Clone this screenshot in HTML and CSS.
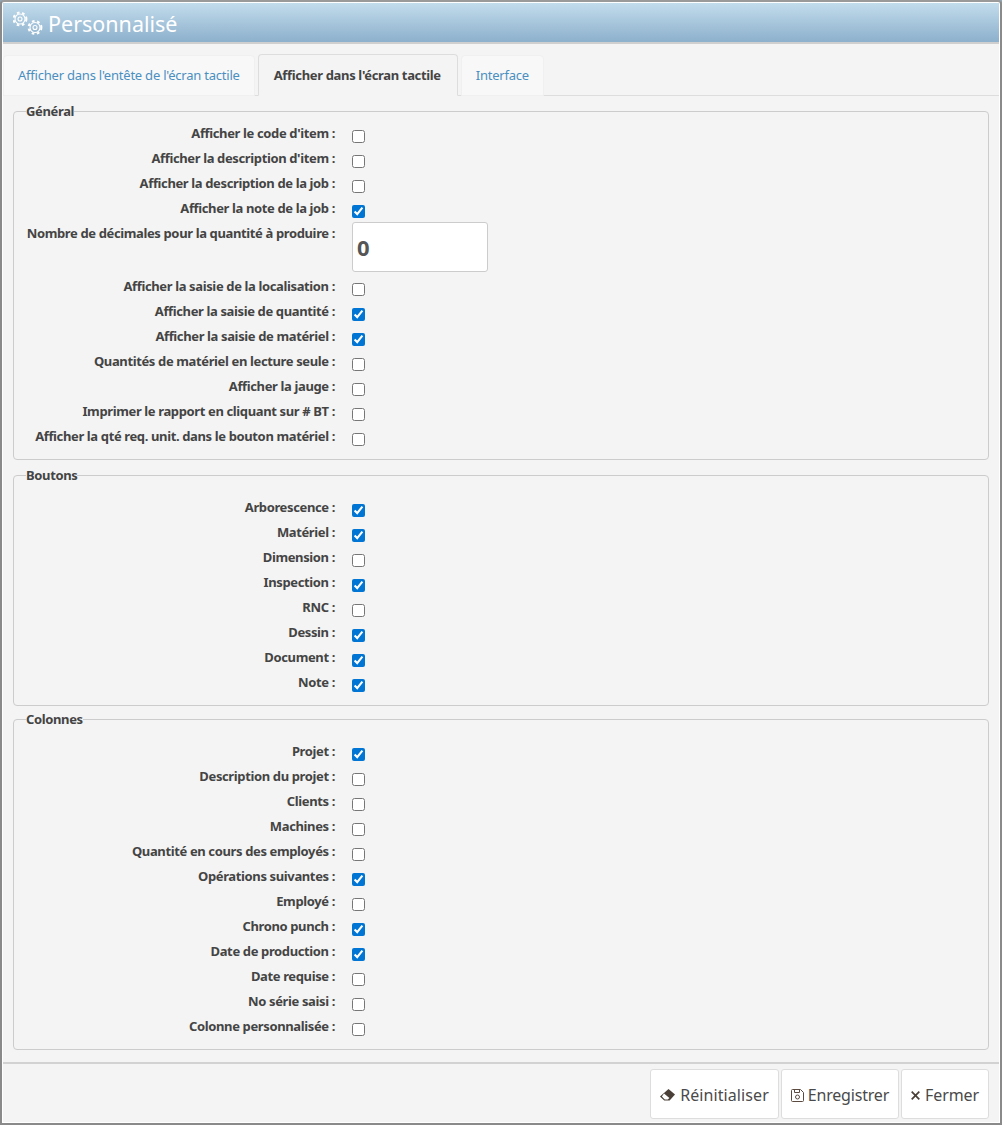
FILE: index.html
```html
<!DOCTYPE html>
<html lang="fr">
<head>
    <meta charset="UTF-8">
    <title>Personnalisé</title>
    <link rel="stylesheet" href="styles.css">
</head>
<body>
    <div class="dialog">
        <div class="dialog-header">
            <svg class="gears" width="30" height="24" viewBox="0 0 30 24" fill="none" stroke="#fff">
                <g stroke-width="2" stroke-dasharray="2.6 2.66">
                    <circle cx="7" cy="8" r="6.4"/>
                    <circle cx="22" cy="16.5" r="6.4"/>
                </g>
                <g stroke-width="1.1">
                    <circle cx="7" cy="8" r="5"/>
                    <circle cx="22" cy="16.5" r="5"/>
                    <circle cx="7" cy="8" r="2"/>
                    <circle cx="22" cy="16.5" r="2"/>
                </g>
            </svg>
            <span class="dialog-title">Personnalisé</span>
        </div>
        <div class="dialog-body">
            <div class="tabs">
                <a class="tab">Afficher dans l'entête de l'écran tactile</a>
                <a class="tab active">Afficher dans l'écran tactile</a>
                <a class="tab">Interface</a>
            </div>
            <div class="tab-content">
                <fieldset class="general">
                    <legend>Général</legend>
                    <div class="row"><label>Afficher le code d'item :</label><input type="checkbox"></div>
                    <div class="row"><label>Afficher la description d'item :</label><input type="checkbox"></div>
                    <div class="row"><label>Afficher la description de la job :</label><input type="checkbox"></div>
                    <div class="row"><label>Afficher la note de la job :</label><input type="checkbox" checked></div>
                    <div class="row row-input"><label>Nombre de décimales pour la quantité à produire :</label><input type="text" class="num" value="0"></div>
                    <div class="row"><label>Afficher la saisie de la localisation :</label><input type="checkbox"></div>
                    <div class="row"><label>Afficher la saisie de quantité :</label><input type="checkbox" checked></div>
                    <div class="row"><label>Afficher la saisie de matériel :</label><input type="checkbox" checked></div>
                    <div class="row"><label>Quantités de matériel en lecture seule :</label><input type="checkbox"></div>
                    <div class="row"><label>Afficher la jauge :</label><input type="checkbox"></div>
                    <div class="row"><label>Imprimer le rapport en cliquant sur # BT :</label><input type="checkbox"></div>
                    <div class="row"><label>Afficher la qté req. unit. dans le bouton matériel :</label><input type="checkbox"></div>
                </fieldset>
                <fieldset class="buttons">
                    <legend>Boutons</legend>
                    <div class="row"><label>Arborescence :</label><input type="checkbox" checked></div>
                    <div class="row"><label>Matériel :</label><input type="checkbox" checked></div>
                    <div class="row"><label>Dimension :</label><input type="checkbox"></div>
                    <div class="row"><label>Inspection :</label><input type="checkbox" checked></div>
                    <div class="row"><label>RNC :</label><input type="checkbox"></div>
                    <div class="row"><label>Dessin :</label><input type="checkbox" checked></div>
                    <div class="row"><label>Document :</label><input type="checkbox" checked></div>
                    <div class="row"><label>Note :</label><input type="checkbox" checked></div>
                </fieldset>
                <fieldset>
                    <legend>Colonnes</legend>
                    <div class="row"><label>Projet :</label><input type="checkbox" checked></div>
                    <div class="row"><label>Description du projet :</label><input type="checkbox"></div>
                    <div class="row"><label>Clients :</label><input type="checkbox"></div>
                    <div class="row"><label>Machines :</label><input type="checkbox"></div>
                    <div class="row"><label>Quantité en cours des employés :</label><input type="checkbox"></div>
                    <div class="row"><label>Opérations suivantes :</label><input type="checkbox" checked></div>
                    <div class="row"><label>Employé :</label><input type="checkbox"></div>
                    <div class="row"><label>Chrono punch :</label><input type="checkbox" checked></div>
                    <div class="row"><label>Date de production :</label><input type="checkbox" checked></div>
                    <div class="row"><label>Date requise :</label><input type="checkbox"></div>
                    <div class="row"><label>No série saisi :</label><input type="checkbox"></div>
                    <div class="row"><label>Colonne personnalisée :</label><input type="checkbox"></div>
                </fieldset>
            </div>
        </div>
        <div class="dialog-footer">
            <button class="btn">
                <svg width="15" height="12" viewBox="0 0 15 12"><path fill="#4a4038" d="M8.5 0 15 5.6 9.6 11.5H4.2L0 7.6z"/><path fill="#fff" d="M4 4.4 9.4 9 7.8 10.4H4.8L1.9 7.6z"/></svg>
                Réinitialiser
            </button>
            <button class="btn btn-save">
                <svg width="13" height="13" viewBox="0 0 13 13" fill="none" stroke="#5a4a40"><path d="M1.5.5h8l3 3v8a1 1 0 0 1-1 1h-10a1 1 0 0 1-1-1v-10a1 1 0 0 1 1-1z"/><path d="M3.5.5v3h5v-3"/><circle cx="6.5" cy="8" r="2"/></svg>
                Enregistrer
            </button>
            <button class="btn btn-close">
                <svg width="9" height="9" viewBox="0 0 9 9" stroke="#4a4038" stroke-width="1.7"><path d="M.7.7l7.6 7.6M8.3.7L.7 8.3"/></svg>
                Fermer
            </button>
        </div>
    </div>
</body>
</html>
```
FILE: styles.css
```css
* {
    box-sizing: border-box;
}
html, body {
    height: 100%;
}
body {
    margin: 0;
    font-family: "Noto Sans", "Open Sans", sans-serif;
    font-size: 13px;
    color: #444;
    background: #8fa9bb;
}
.dialog {
    height: 1125px;
    display: flex;
    flex-direction: column;
    padding: 1px;
    background: #fff;
    border: 2px solid #8a8a8a;
    border-top-color: #9a9a9a;
    border-radius: 4px 4px 0 0;
}
.dialog-header {
    height: 39px;
    display: flex;
    align-items: center;
    padding-left: 10px;
    color: #fff;
    background: linear-gradient(#c2dcec, #8db0cc);
    flex-shrink: 0;
}
.gears {
    margin-right: 5px;
}
.dialog-title {
    font-size: 21.5px;
    padding-top: 2px;
}
.dialog-body {
    flex: 1;
    padding-top: 10px;
    background: #f4f4f4;
    border-top: 2px solid #cfcfcf;
    border-bottom: 2px solid #d2d2d2;
}
.tabs {
    display: flex;
    gap: 3px;
    height: 42px;
    border-bottom: 1px solid #ddd;
}
.tab {
    display: flex;
    align-items: center;
    padding: 0 14px 2px;
    height: 41px;
    margin-top: 1px;
    letter-spacing: -0.22px;
    color: #4a8fc0;
    background: #f8f8f8;
    border: 1px solid #f0f0f0;
    border-radius: 4px 4px 0 0;
}
.tab.active {
    height: 42px;
    margin-top: 0;
    padding: 0 16px 0 15px;
    font-weight: bold;
    letter-spacing: -0.34px;
    color: #444;
    background: #f4f4f4;
    border-color: #ddd;
    border-bottom-color: #f4f4f4;
}
.tab-content {
    padding: 7px 10px 0;
}
fieldset {
    margin: 0 0 7px;
    padding: 11px 0 11px;
    border: 1px solid #ccc;
    border-radius: 4px;
}
fieldset.general {
    padding-top: 1px;
}
fieldset.buttons {
    margin-bottom: 5px;
}
legend {
    margin-left: 12px;
    padding: 0;
    font-weight: bold;
    letter-spacing: -0.36px;
    line-height: 16px;
}
.row {
    display: flex;
    height: 25px;
    align-items: center;
}
.row label {
    width: 321px;
    font-weight: bold;
    letter-spacing: -0.37px;
    text-align: right;
    margin-right: 17px;
    white-space: nowrap;
}
.row input[type=checkbox] {
    width: 13px;
    height: 13px;
    margin: 8px 0 0;
    accent-color: #0075d3;
}
.row-input {
    height: 53px;
    align-items: flex-start;
}
.row-input label {
    padding-top: 4px;
}
.num {
    width: 136px;
    height: 50px;
    margin-top: 2px;
    padding: 0 4px;
    font-family: inherit;
    font-size: 22px;
    font-weight: bold;
    color: #555;
    background: #fff;
    border: 1px solid #ccc;
    border-radius: 3px;
}
.dialog-footer {
    height: 58px;
    flex-shrink: 0;
    display: flex;
    justify-content: flex-end;
    align-items: flex-start;
    gap: 2px;
    padding: 5px 10px 0 0;
    background: #f4f4f4;
}
.btn {
    height: 50px;
    padding: 2px 9px 0;
    display: flex;
    align-items: center;
    gap: 5px;
    font-family: inherit;
    font-size: 16px;
    letter-spacing: 0.08px;
    color: #4a4a4a;
    background: #fff;
    border: 1px solid #ddd;
    border-radius: 3px;
}
.btn-save {
    gap: 4px;
    letter-spacing: -0.2px;
}
.btn-close {
    letter-spacing: -0.1px;
}
```
